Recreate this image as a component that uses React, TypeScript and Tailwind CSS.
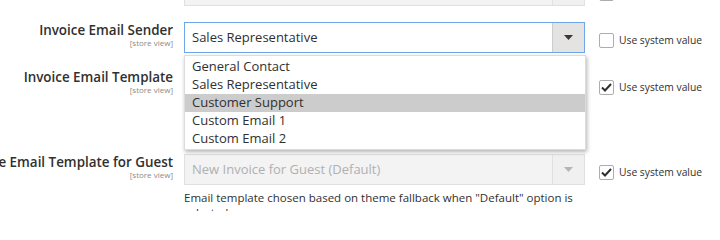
import { ReactNode } from "react";

const SENDERS = [
  "General Contact",
  "Sales Representative",
  "Customer Support",
  "Custom Email 1",
  "Custom Email 2",
];

const NOTE =
  'Email template chosen based on theme fallback when "Default" option is selected.';

// small down-pointing triangle used by the select boxes
const Arrow = ({ color }: { color: string }) => (
  <svg width="9" height="5" viewBox="0 0 9 5">
    <polygon points="0,0 9,0 4.5,5" fill={color} />
  </svg>
);

const Checkbox = ({ checked }: { checked: boolean }) => (
  <div className="flex items-center">
    <span className="w-[15px] h-[15px] rounded-[2px] border border-[#adadad] bg-white flex items-center justify-center">
      {checked && (
        <svg width="11" height="9" viewBox="0 0 11 9">
          <path d="M1 4.5 L4 7.5 L10 1" fill="none" stroke="#303030" strokeWidth="2" />
        </svg>
      )}
    </span>
    <span className="ml-[5px] text-[10.3px] text-[#303030] leading-[15px]">Use system value</span>
  </div>
);

const SelectBox = ({
  value,
  disabled,
  focused,
}: {
  value: string;
  disabled?: boolean;
  focused?: boolean;
}) => (
  <div
    className={`h-[31px] w-[401px] flex border ${
      disabled
        ? "bg-[#f3f3f3] border-[#e0e0e0] text-[#b0b0b0]"
        : focused
        ? "bg-white border-[#6ea6e6] text-[#303030]"
        : "bg-white border-[#adadad] text-[#303030]"
    }`}
  >
    <div className="flex-1 pl-[7px] flex items-center text-[13px] whitespace-nowrap overflow-hidden">
      {value}
    </div>
    <div
      className={`w-[32px] flex items-center justify-center border-l ${
        disabled ? "bg-[#f0f0f0] border-[#e0e0e0]" : "bg-[#e3e3e3] border-[#cdcdcd]"
      }`}
    >
      <Arrow color={disabled ? "#b5b5b5" : "#41362f"} />
    </div>
  </div>
);

const Row = ({
  label,
  checked,
  className,
  children,
}: {
  label?: string;
  checked: boolean;
  className: string;
  children: ReactNode;
}) => (
  <div className={`flex items-start ${className}`}>
    <div className="w-[173px] shrink-0 flex flex-col items-end">
      {label && (
        <>
          <div className="w-full flex justify-end">
            <span className="shrink-0 whitespace-nowrap text-[13.4px] font-semibold leading-[17px] text-[#303030]">
              {label}
            </span>
          </div>
          <span className="text-[8px] leading-[8px] text-[#8a8a8a]">[store view]</span>
        </>
      )}
    </div>
    <div className="ml-[11px] w-[401px] shrink-0 relative">{children}</div>
    <div className="ml-[14px] mt-[11px]">
      <Checkbox checked={checked} />
    </div>
  </div>
);

const Note = () => (
  <p className="mt-[5px] text-[11.5px] leading-[15px] text-[#303030]">{NOTE}</p>
);

export default function App() {
  return (
    <div className="w-[720px] h-[211px] overflow-hidden bg-white font-['Open_Sans',sans-serif]">
      {/* row above, scrolled mostly out of view */}
      <Row checked className="-mt-[25px]">
        <div className="h-[31px] w-[401px] flex border bg-[#f3f3f3] border-[#e0e0e0]">
          <div className="flex-1" />
          <div className="w-[32px] border-l border-[#e0e0e0] bg-[#f0f0f0]" />
        </div>
      </Row>

      <Row label="Invoice Email Sender" checked={false} className="mt-[16px] relative z-10">
        <SelectBox value="Sales Representative" focused />
        {/* open option list */}
        <div className="absolute left-0 top-[33px] w-[402px] bg-white border border-[#dcdcdc] pt-[2px] pb-[1px] shadow-[1px_2px_4px_rgba(0,0,0,0.3)]">
          {SENDERS.map((name) => (
            <div
              key={name}
              className={`h-[18px] pl-[7px] flex items-center text-[13px] text-[#303030] ${
                name === "Customer Support" ? "bg-[#cccccc]" : ""
              }`}
            >
              {name}
            </div>
          ))}
        </div>
      </Row>

      <Row label="Invoice Email Template" checked className="mt-[16px]">
        {/* select and its note sit under the open list */}
        <div className="h-[31px] w-[401px] border border-[#e0e0e0] bg-[#f3f3f3]" />
        <div className="h-[35px]" />
      </Row>

      <Row label="Invoice Email Template for Guest" checked className="mt-[19px]">
        <SelectBox value="New Invoice for Guest (Default)" disabled />
        <Note />
      </Row>
    </div>
  );
}
